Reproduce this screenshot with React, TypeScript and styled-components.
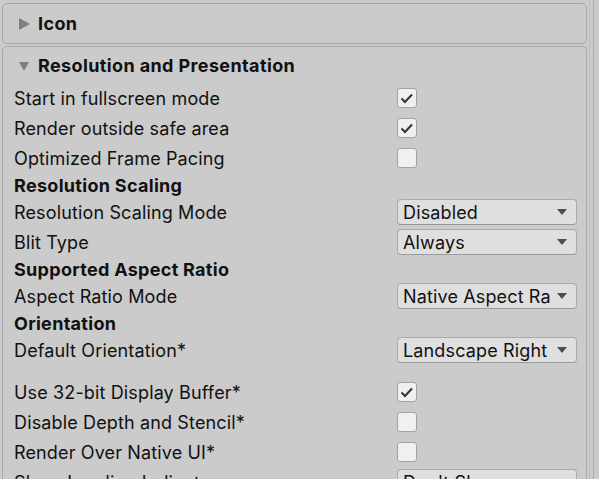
import styled, { createGlobalStyle } from 'styled-components';

const GlobalStyle = createGlobalStyle`
  html, body {
    margin: 0;
    padding: 0;
    background: #cbcbcb;
  }
  body {
    font-family: Inter, "Noto Sans", sans-serif;
    font-size: 18px;
    letter-spacing: 0.14px;
    color: #111111;
  }
`;

const Window = styled.div`
  display: flex;
  width: 599px;
  height: 479px;
  overflow: hidden;
`;

const Content = styled.div`
  width: 587px;
  padding: 3px 0 0 2px;
  display: flex;
  flex-direction: column;
  gap: 2px;
`;

const Scrollbar = styled.div`
  width: 10px;
  margin-left: 2px;
  border-left: 1px solid #bdbdbd;
  display: flex;

  &::after {
    content: '';
    margin-left: 3px;
    width: 1px;
    background: #a9a9a9;
  }
`;

const Panel = styled.div`
  width: 583px;
  border: 1px solid #a7a7a7;
  border-radius: 5px;
  flex-shrink: 0;
`;

const OpenPanel = styled(Panel)`
  border-bottom: none;
  border-radius: 5px 5px 0 0;
  flex: 1;
`;

const FoldoutHeader = styled.div<{ $h: number }>`
  height: ${(p) => p.$h}px;
  display: flex;
  align-items: center;
  padding-left: 15px;
  gap: 8px;
  font-weight: 700;
  letter-spacing: 0.38px;
`;

const Arrow = styled.span<{ $open?: boolean }>`
  width: 0;
  height: 0;
  ${(p) =>
    p.$open
      ? `
    margin: 2px 1px 0 1px;
    border-left: 5px solid transparent;
    border-right: 5px solid transparent;
    border-top: 9px solid #7f7f7f;
  `
      : `
    margin-left: 1px;
    border-top: 6px solid transparent;
    border-bottom: 6px solid transparent;
    border-left: 11px solid #7f7f7f;
  `}
`;

const Row = styled.div<{ $h: number; $bold?: boolean }>`
  height: ${(p) => p.$h}px;
  display: grid;
  grid-template-columns: 383px 180px;
  align-items: center;
  padding-left: 11px;
  font-weight: ${(p) => (p.$bold ? 700 : 400)};
  letter-spacing: ${(p) => (p.$bold ? '0.3px' : '0.14px')};
  white-space: nowrap;
`;

const Spacer = styled.div`
  height: 12px;
`;

const Box = styled.div`
  width: 18px;
  height: 18px;
  border: 1px solid #a3a3a3;
  border-radius: 3px;
  background: #f0f0f0;
  display: flex;
  align-items: center;
  justify-content: center;
`;

const Dropdown = styled.div`
  height: 24px;
  border: 1px solid #a9a9a9;
  border-bottom-color: #999999;
  border-radius: 4px;
  background: #dfdfdf;
  display: flex;
  align-items: center;
  padding-left: 5px;
  padding-right: 9px;
  gap: 7px;
`;

const DropdownText = styled.span`
  flex: 1;
  overflow: hidden;
  white-space: nowrap;
`;

const Caret = styled.span`
  width: 0;
  height: 0;
  border-left: 5px solid transparent;
  border-right: 5px solid transparent;
  border-top: 6px solid #4d4d4d;
  flex-shrink: 0;
`;

const Check = ({ on }: { on?: boolean }) => (
  <Box>
    {on && (
      <svg width="18" height="18" viewBox="0 0 18 18">
        <path d="M3.5 9.5 L7 13 L14 5.5" fill="none" stroke="#333" strokeWidth="2" />
      </svg>
    )}
  </Box>
);

const Select = ({ value }: { value: string }) => (
  <Dropdown>
    <DropdownText>{value}</DropdownText>
    <Caret />
  </Dropdown>
);

type Field =
  | { kind: 'check'; label: string; on?: boolean }
  | { kind: 'select'; label: string; value: string }
  | { kind: 'header'; label: string }
  | { kind: 'space' };

const fields: Field[] = [
  { kind: 'check', label: 'Start in fullscreen mode', on: true },
  { kind: 'check', label: 'Render outside safe area', on: true },
  { kind: 'check', label: 'Optimized Frame Pacing' },
  { kind: 'header', label: 'Resolution Scaling' },
  { kind: 'select', label: 'Resolution Scaling Mode', value: 'Disabled' },
  { kind: 'select', label: 'Blit Type', value: 'Always' },
  { kind: 'header', label: 'Supported Aspect Ratio' },
  { kind: 'select', label: 'Aspect Ratio Mode', value: 'Native Aspect Ratio' },
  { kind: 'header', label: 'Orientation' },
  { kind: 'select', label: 'Default Orientation*', value: 'Landscape Right' },
  { kind: 'space' },
  { kind: 'check', label: 'Use 32-bit Display Buffer*', on: true },
  { kind: 'check', label: 'Disable Depth and Stencil*' },
  { kind: 'check', label: 'Render Over Native UI*' },
  { kind: 'select', label: 'Show Loading Indicator', value: "Don't Show" },
];

const App = () => {
  return (
    <Window>
      <GlobalStyle />
      <Content>
        <Panel>
          <FoldoutHeader $h={39}>
            <Arrow />
            Icon
          </FoldoutHeader>
        </Panel>
        <OpenPanel>
          <FoldoutHeader $h={36}>
            <Arrow $open />
            Resolution and Presentation
          </FoldoutHeader>
          {fields.map((f, i) => {
            if (f.kind === 'space') return <Spacer key={i} />;
            if (f.kind === 'header')
              return (
                <Row key={i} $h={24} $bold>
                  {f.label}
                </Row>
              );
            return (
              <Row key={i} $h={30}>
                <span>{f.label}</span>
                {f.kind === 'check' ? <Check on={f.on} /> : <Select value={f.value} />}
              </Row>
            );
          })}
        </OpenPanel>
      </Content>
      <Scrollbar />
    </Window>
  );
};

export default App;
